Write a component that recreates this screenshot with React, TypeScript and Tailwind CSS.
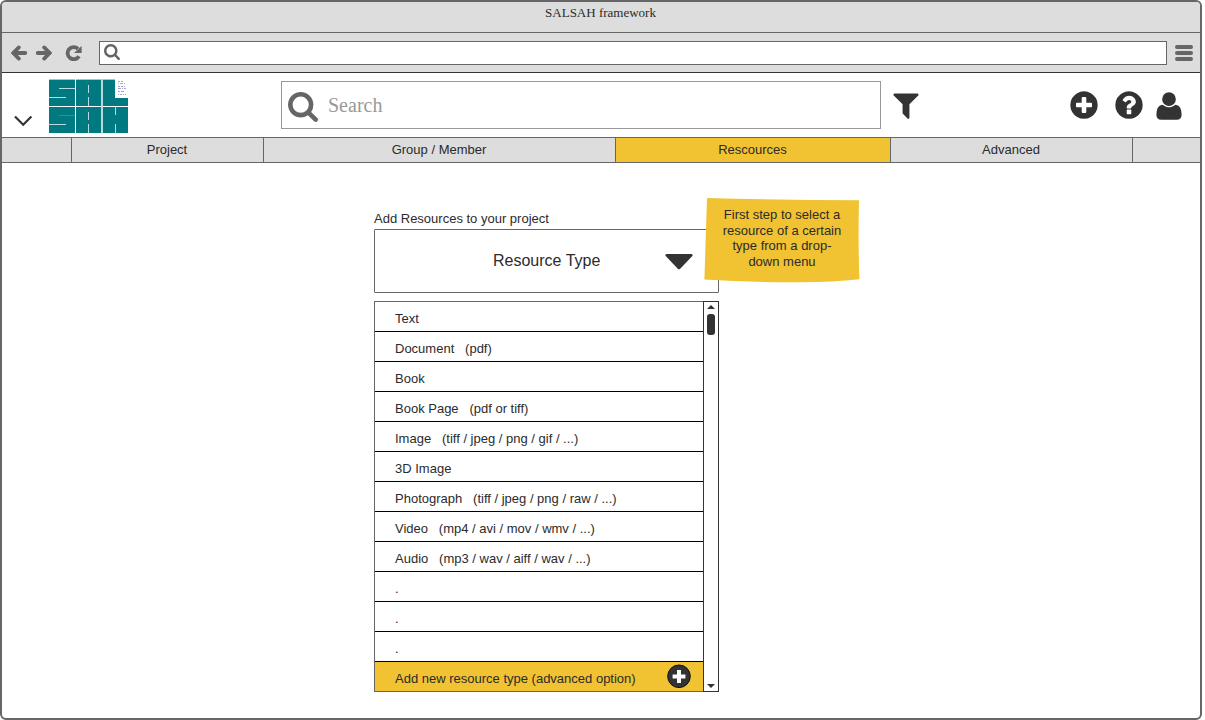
import React from "react";

const CIRCLE = "m320-64q0 209-103 385.5t-279.5 279.5-385.5 103-385.5-103-279.5-279.5-103-385.5 103-385.5 279.5-279.5 385.5-103 385.5 103 279.5 279.5 103 385.5z";
const PLUS =
  "M1344 960v-128q0-26-19-45t-45-19h-256v-256q0-26-19-45t-45-19h-128q-26 0-45 19t-19 45v256h-256q-26 0-45 19t-19 45v128q0 26 19 45t45 19h256v256q0 26 19 45t45 19h128q26 0 45-19t19-45v-256h256q26 0 45-19t19-45z" +
  CIRCLE;
const QUESTION =
  "M1024 1376v-192q0-14-9-23t-23-9h-192q-14 0-23 9t-9 23v192q0 14 9 23t23 9h192q14 0 23-9t9-23zm256-672q0-88-55.5-163t-138.5-116-170-41q-243 0-371 213-15 24 8 42l132 100q7 6 19 6 16 0 25-12 53-68 86-92 34-24 86-24 48 0 85.5 26t37.5 59q0 38-20 61t-68 45q-63 28-115.5 86.5t-52.5 125.5v36q0 14 9 23t23 9h192q14 0 23-9t9-23q0-19 21.5-49.5t54.5-49.5q32-18 49-28.5t46-35 44.5-48 28-60.5 12.5-81zm384 192q0 209-103 385.5t-279.5 279.5-385.5 103-385.5-103-279.5-279.5-103-385.5 103-385.5 279.5-279.5 385.5-103 385.5 103 279.5 279.5 103 385.5z";
const SEARCH =
  "M1216 832q0-185-131.5-316.5t-316.5-131.5-316.5 131.5-131.5 316.5 131.5 316.5 316.5 131.5 316.5-131.5 131.5-316.5zm512 832q0 52-38 90t-90 38q-54 0-90-38l-343-342q-179 124-399 124-143 0-273.5-55.5t-225-150-150-225-55.5-273.5 55.5-273.5 150-225 225-150 273.5-55.5 273.5 55.5 225 150 150 225 55.5 273.5q0 220-124 399l343 343q37 37 37 90z";
const FILTER =
  "M1595 295q17 41-14 70l-493 493v742q0 42-39 59-13 5-25 5-27 0-45-19l-256-256q-19-19-19-45v-486l-493-493q-31-29-14-70 17-39 59-39h1280q42 0 59 39z";
const USER =
  "M1600 1405q0 120-73 189.5t-194 69.5h-874q-121 0-194-69.5t-73-189.5q0-53 3.5-103.5t14-109 26.5-108.5 43-97.5 62-81 85.5-53.5 111.5-20q9 0 42 21.5t74.5 48 108 48 133.5 21.5 133.5-21.5 108-48 74.5-48 42-21.5q61 0 111.5 20t85.5 53.5 62 81 43 97.5 26.5 108.5 14 109 3.5 103.5zm-320-893q0 159-112.5 271.5t-271.5 112.5-271.5-112.5-112.5-271.5 112.5-271.5 271.5-112.5 271.5 112.5 112.5 271.5z";

function Icon({ d, box = "0 0 1792 1792", className }: { d: string; box?: string; className: string }) {
  return (
    <svg viewBox={box} className={className} fill="currentColor" aria-hidden="true">
      <path d={d} />
    </svg>
  );
}

function Arrow({ className = "" }: { className?: string }) {
  return (
    <svg width="17" height="16" viewBox="0 0 17 16" className={className} fill="none" stroke="#666" strokeLinecap="round" aria-hidden="true">
      <path d="M2.5 8H14.3" strokeWidth="3.8" />
      <path d="M7.8 2.4L2.3 8l5.5 5.6" strokeWidth="3.8" />
    </svg>
  );
}

function Logo() {
  return (
    <svg width="80" height="54" viewBox="0 0 80 54" shapeRendering="crispEdges" aria-hidden="true">
      <path fill="#007a80" d="M0 0H66V19H79V54H0Z" />
      <path fill="#9ccbcd" d="M0 0H66V1H0Z" />
      <path fill="#fff" d="M0 27H79V28H0ZM26 0H27V54H26Z" />
      <path fill="#b8dadb" d="M52 0H54V54H52ZM10 9H26V10H10ZM0 18H17V19H0ZM0 45H17V46H0ZM39 6H40V14H39ZM39 18H40V27H39ZM39 33H40V41H39ZM39 45H40V54H39ZM66 28H67V36H66ZM66 45H67V54H66Z" />
      <path fill="#2f9296" d="M10 36H26V37H10Z" />
      <g stroke="#8f8fc8" strokeWidth="1" opacity=".8">
        <path d="M69 2.5h5" strokeDasharray="2 1" />
        <path d="M69 4.5h8" strokeDasharray="1 1 3 1" />
        <path d="M69 7.5h7" strokeDasharray="2 1" />
        <path d="M69 9.5h8" strokeDasharray="3 1 1 1" />
        <path d="M69 12.5h7" strokeDasharray="2 1 3 1" />
        <path d="M69 15.5h8" strokeDasharray="1 1 2 1" />
      </g>
    </svg>
  );
}

const rows = [
  "Text",
  "Document   (pdf)",
  "Book",
  "Book Page   (pdf or tiff)",
  "Image   (tiff / jpeg / png / gif / ...)",
  "3D Image",
  "Photograph   (tiff / jpeg / png / raw / ...)",
  "Video   (mp4 / avi / mov / wmv / ...)",
  "Audio   (mp3 / wav / aiff / wav / ...)",
  ".",
  ".",
  ".",
];

function Tabs() {
  return (
    <nav className="flex h-[26px] shrink-0 border-y border-[#666] bg-[#ddd] text-center leading-[23px]">
      <div className="w-[70px] border-r border-[#666]" />
      <div className="w-48 border-r border-[#666] pr-px">Project</div>
      <div className="w-[352px] border-r border-[#666] pr-px">Group / Member</div>
      <div className="w-[275px] border-r border-[#666] bg-[#f1c232] pr-px">Rescources</div>
      <div className="w-[242px] border-r border-[#666] pr-px">Advanced</div>
      <div className="flex-1" />
    </nav>
  );
}

export default function App() {
  return (
    <div className="h-[720px] w-[1205px] overflow-hidden bg-white font-['Liberation_Sans',Arial,sans-serif] text-[13px] text-[#2b2b2b]">
      <div className="flex h-[720px] w-[1202px] flex-col overflow-hidden rounded-[6px] border-2 border-[#666] bg-white">
        <div className="h-[31px] shrink-0 border-b border-[#666] bg-[#ddd] pr-px text-center font-['Liberation_Serif',serif] text-[13px] leading-[22px]">
          SALSAH framework
        </div>

        <div className="flex h-10 shrink-0 items-center border-b border-[#333] bg-[#ddd] pl-[9px]">
          <Arrow />
          <Arrow className="ml-[7px] rotate-180" />
          <svg width="18" height="16" viewBox="0 0 18 16" className="ml-[13px]" aria-hidden="true">
            <path d="M14 11.2A6.1 6.1 0 1 1 13 3.8" fill="none" stroke="#666" strokeWidth="3.8" />
            <path d="M16.6 1V8H9Z" fill="#666" />
          </svg>
          <div className="ml-4 flex h-6 w-[1068px] shrink-0 items-center border border-[#666] bg-white pl-1 text-[#666]">
            <Icon d={SEARCH} box="64 128 1664 1664" className="mb-px size-4" />
          </div>
          <div className="ml-2 flex flex-col gap-[2px]">
            <i className="h-1 w-[18px] rounded-[2px] bg-[#666]" />
            <i className="h-1 w-[18px] rounded-[2px] bg-[#666]" />
            <i className="h-1 w-[18px] rounded-[2px] bg-[#666]" />
          </div>
        </div>

        <header className="flex h-16 shrink-0 items-start text-[#333]">
          <svg width="20" height="12" viewBox="0 0 20 12" className="mt-[42px] ml-3" fill="none" stroke="#333" strokeWidth="2.2" aria-hidden="true">
            <path d="M1 1.5L9.2 9.7L17.4 1.5" />
          </svg>
          <div className="mt-[6px] ml-[15px]">
            <Logo />
          </div>
          <div className="mt-2 ml-[152px] flex h-12 w-[600px] items-center border border-[#999] pl-[6px]">
            <Icon d={SEARCH} box="64 128 1664 1664" className="mt-[3px] size-[30px] text-[#666]" />
            <span className="ml-[10px] font-['Liberation_Serif',serif] text-[20px] leading-6 text-[#999]">Search</span>
          </div>
          <Icon d={FILTER} className="mt-4 ml-[9px] size-8" />
          <Icon d={PLUS} className="mt-4 ml-[146px] size-8" />
          <Icon d={QUESTION} className="mt-4 ml-[13px] size-8" />
          <Icon d={USER} className="mt-[17px] ml-2 size-8" />
        </header>

        <Tabs />

        <main className="ml-[372px] w-[345px] pt-12">
          <div className="h-[18px] leading-4">Add Resources to your project</div>
          <div className="relative flex h-16 items-center rounded-[1px] border border-[#666] pl-[118px] text-[16px]">
            <span className="w-[172px]">Resource Type</span>
            <svg width="28" height="16" viewBox="0 0 28 16" className="mt-[2px]" fill="#333" aria-hidden="true">
              <path d="M1.5 0H26.5Q28.3 .4 27.3 2L15.2 14.7Q14 15.8 12.8 14.7L.7 2Q-.3 .4 1.5 0Z" />
            </svg>
            <div className="absolute top-[-33px] left-[329px] h-[88px] w-[156px]">
              <svg width="156" height="88" viewBox="0 0 156 88" className="absolute inset-0" fill="#f1c232" aria-hidden="true">
                <path d="M3 1Q78 3 155 3.3Q154 43 155.4 82.3Q122 86 84 85.2Q40 85 .4 82.6Z" />
              </svg>
              <p className="relative px-[10px] pt-[10px] text-center text-[13px] leading-[15.6px]">
                First step to select a<br />resource of a certain<br />type from a drop-<br />down menu
              </p>
            </div>
          </div>

          <div className="mt-2 flex h-[391px]">
            <ul className="w-[329px] border-t border-b border-l border-[#666]">
              {rows.map((row, i) => (
                <li key={i} className="h-[30px] border-b border-black pl-5 leading-[33px] whitespace-pre">
                  {row}
                </li>
              ))}
              <li className="flex h-[29px] items-start bg-[#f1c232] pl-5 leading-[33px] whitespace-pre">
                <span className="w-[270px]">Add new resource type (advanced option)</span>
                <svg width="26" height="26" viewBox="0 0 26 26" className="mt-[1px]" aria-hidden="true">
                  <circle cx="14" cy="13.3" r="11.3" fill="#333" stroke="#111" />
                  <path d="M14 7.1V19.9M7.6 13.5H20.4" stroke="#fff" strokeWidth="4" />
                </svg>
              </li>
            </ul>
            <div className="flex w-4 flex-col items-center border border-[#333]">
              <svg width="8" height="4" viewBox="0 0 8 4" className="mt-[3px]" fill="#333" aria-hidden="true">
                <path d="M0 4L4 0L8 4Z" />
              </svg>
              <div className="mt-[5px] h-[21px] w-2 rounded-[3px] bg-[#333]" />
              <svg width="8" height="4" viewBox="0 0 8 4" className="mt-auto mb-[3px]" fill="#333" aria-hidden="true">
                <path d="M0 0H8L4 4Z" />
              </svg>
            </div>
          </div>
        </main>
      </div>
    </div>
  );
}
